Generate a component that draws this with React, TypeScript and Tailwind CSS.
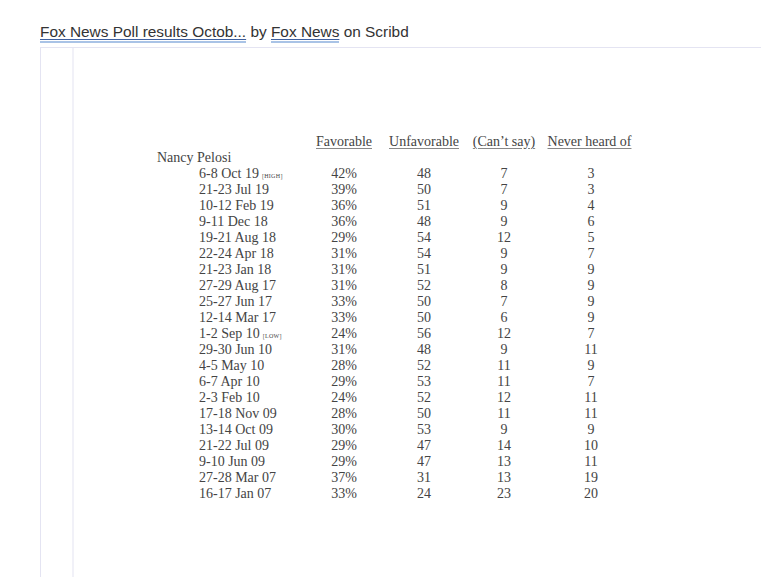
import React from "react";

type Row = { date: string; tag?: string; fav: string; unfav: string; cant: string; never: string };

const rows: Row[] = [
  { date: "6-8 Oct 19", tag: "[HIGH]", fav: "42%", unfav: "48", cant: "7", never: "3" },
  { date: "21-23 Jul 19", fav: "39%", unfav: "50", cant: "7", never: "3" },
  { date: "10-12 Feb 19", fav: "36%", unfav: "51", cant: "9", never: "4" },
  { date: "9-11 Dec 18", fav: "36%", unfav: "48", cant: "9", never: "6" },
  { date: "19-21 Aug 18", fav: "29%", unfav: "54", cant: "12", never: "5" },
  { date: "22-24 Apr 18", fav: "31%", unfav: "54", cant: "9", never: "7" },
  { date: "21-23 Jan 18", fav: "31%", unfav: "51", cant: "9", never: "9" },
  { date: "27-29 Aug 17", fav: "31%", unfav: "52", cant: "8", never: "9" },
  { date: "25-27 Jun 17", fav: "33%", unfav: "50", cant: "7", never: "9" },
  { date: "12-14 Mar 17", fav: "33%", unfav: "50", cant: "6", never: "9" },
  { date: "1-2 Sep 10", tag: "[LOW]", fav: "24%", unfav: "56", cant: "12", never: "7" },
  { date: "29-30 Jun 10", fav: "31%", unfav: "48", cant: "9", never: "11" },
  { date: "4-5 May 10", fav: "28%", unfav: "52", cant: "11", never: "9" },
  { date: "6-7 Apr 10", fav: "29%", unfav: "53", cant: "11", never: "7" },
  { date: "2-3 Feb 10", fav: "24%", unfav: "52", cant: "12", never: "11" },
  { date: "17-18 Nov 09", fav: "28%", unfav: "50", cant: "11", never: "11" },
  { date: "13-14 Oct 09", fav: "30%", unfav: "53", cant: "9", never: "9" },
  { date: "21-22 Jul 09", fav: "29%", unfav: "47", cant: "14", never: "10" },
  { date: "9-10 Jun 09", fav: "29%", unfav: "47", cant: "13", never: "11" },
  { date: "27-28 Mar 07", fav: "37%", unfav: "31", cant: "13", never: "19" },
  { date: "16-17 Jan 07", fav: "33%", unfav: "24", cant: "23", never: "20" },
];

const grid = "grid h-[16px] grid-cols-[42px_105px_80px_80px_80px_94px] leading-[16px]";

export default function App() {
  return (
    <div className="h-[577px] w-[761px] overflow-hidden bg-white">
      <div className="pl-[40px] pt-[23px] font-['Liberation_Sans',Arial,sans-serif] text-[15.4px] leading-[18px] text-[#333]">
        <a className="underline decoration-[#3d5f9e] underline-offset-[2px] border-b-2 border-[#a9c3e6] pb-[1px]">
          Fox News Poll results Octob...
        </a>{" "}
        by{" "}
        <a className="underline decoration-[#3d5f9e] underline-offset-[2px] border-b-2 border-[#a9c3e6] pb-[1px]">
          Fox News
        </a>{" "}
        on Scribd
      </div>

      <div className="ml-[40px] mt-[6px] flex h-[560px] border-l border-t border-[#e4e4f2]">
        <div className="w-[31px] shrink-0" />
        <div className="flex-1 border-l-2 border-[#f1f1f8] pl-[83px] pt-[86px] font-['Liberation_Serif','Times_New_Roman',serif] text-[14px] text-[#444]">
          <div className={grid}>
            <div className="col-span-2" />
            <div className="text-center"><span className="underline decoration-[#888] underline-offset-[2px]">Favorable</span></div>
            <div className="text-center"><span className="underline decoration-[#888] underline-offset-[2px]">Unfavorable</span></div>
            <div className="text-center"><span className="underline decoration-[#888] underline-offset-[2px]">(Can’t say)</span></div>
            <div className="pr-[3px] text-center"><span className="underline decoration-[#888] underline-offset-[2px]">Never heard of</span></div>
          </div>
          <div className={grid}>
            <div className="col-span-6">Nancy Pelosi</div>
          </div>
          {rows.map((r) => (
            <div key={r.date} className={grid}>
              <div />
              <div className="whitespace-nowrap">
                {r.date}
                {r.tag && <span className="ml-[3px] text-[6px] leading-none tracking-[0.3px]">{r.tag}</span>}
              </div>
              <div className="text-center">{r.fav}</div>
              <div className="text-center">{r.unfav}</div>
              <div className="text-center">{r.cant}</div>
              <div className="text-center">{r.never}</div>
            </div>
          ))}
        </div>
      </div>
    </div>
  );
}
